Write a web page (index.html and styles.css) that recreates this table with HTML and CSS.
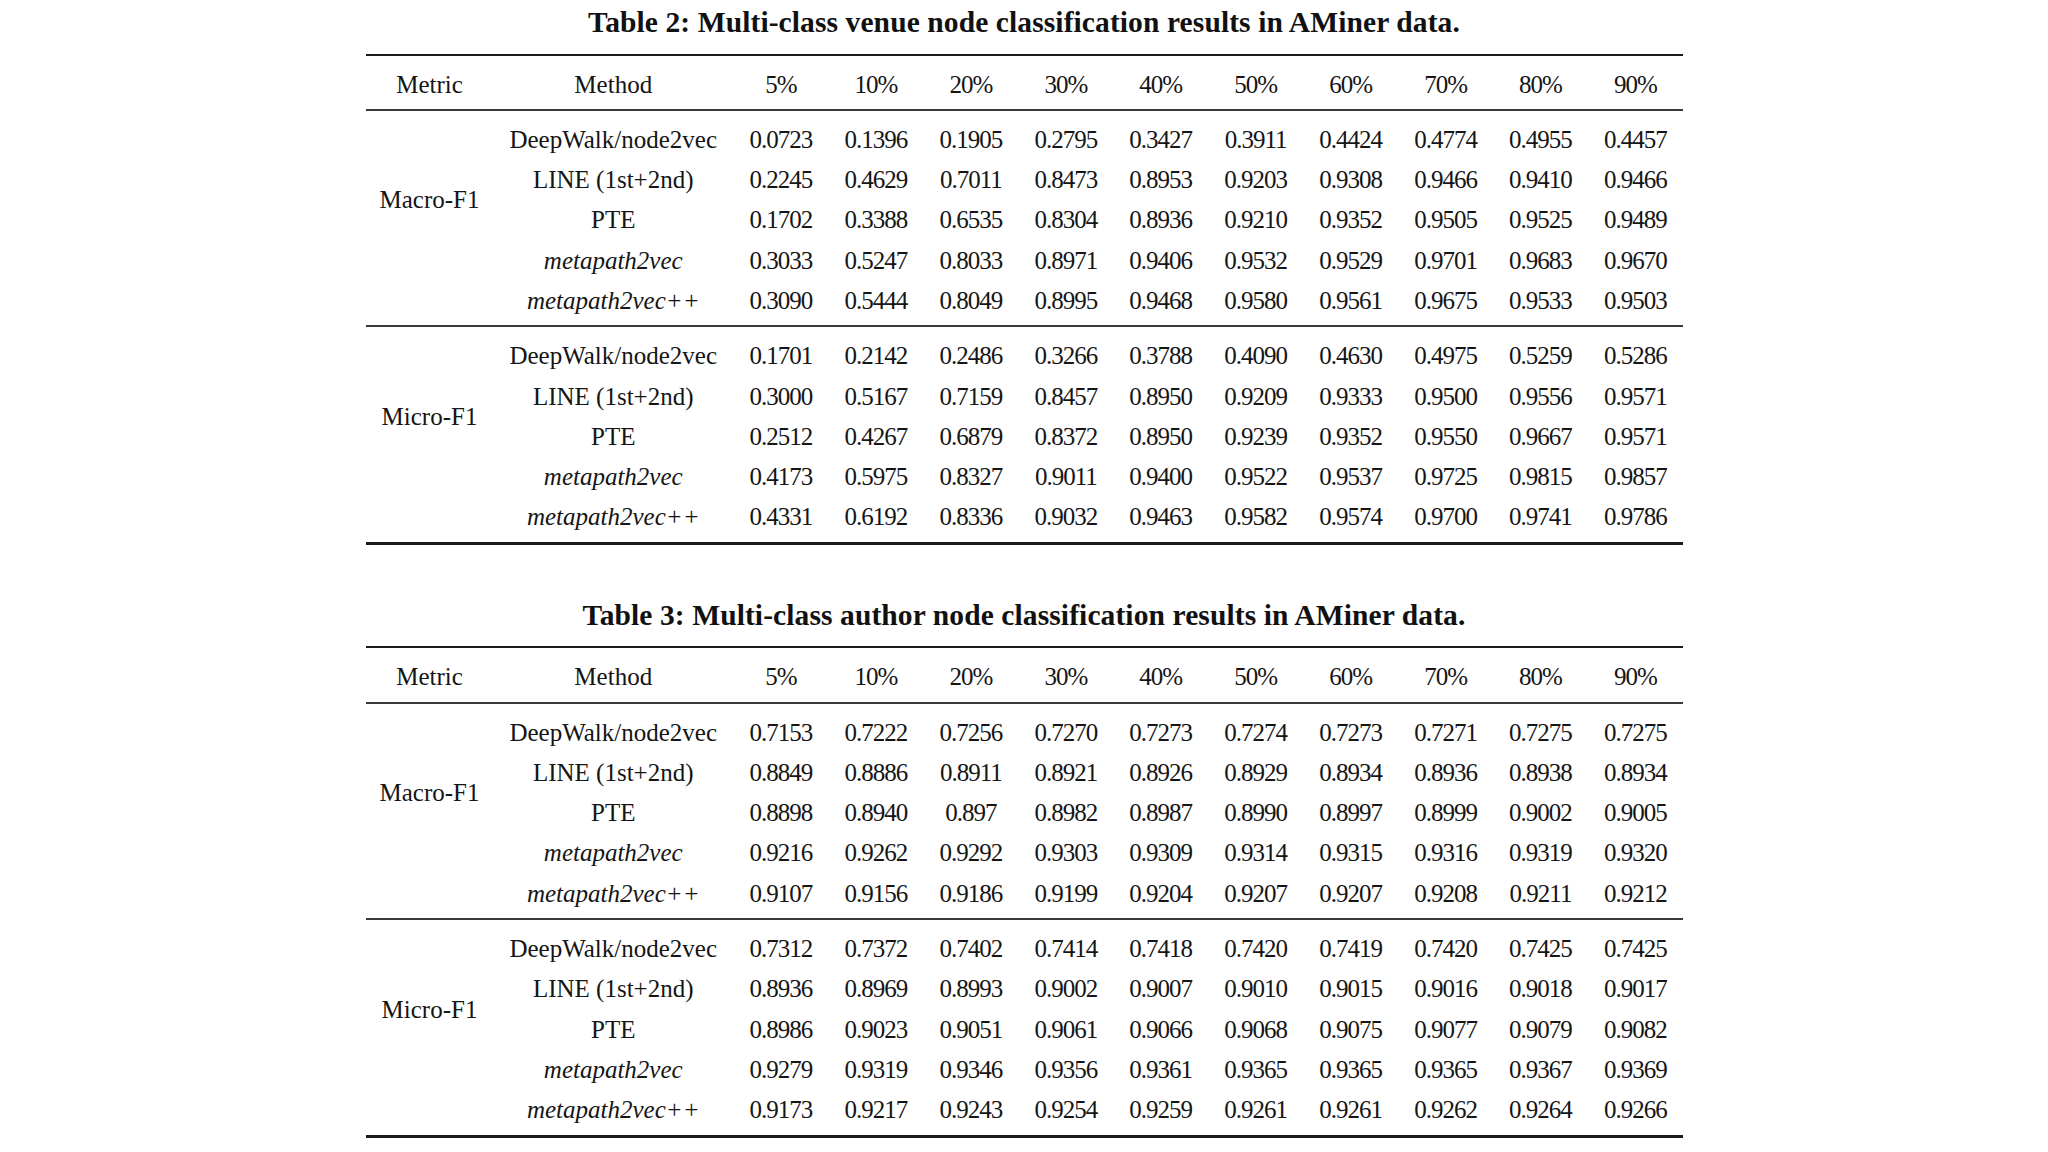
FILE: index.html
```html
<!DOCTYPE html>
<html lang="en">
<head>
<meta charset="utf-8">
<title>AMiner node classification results</title>
<link rel="stylesheet" href="styles.css">
</head>
<body>
<section class="block">
  <h2 class="caption">Table 2: Multi-class venue node classification results in AMiner data.</h2>
  <table class="tbl">
    <colgroup><col class="c-metric"><col class="c-method"><col class="c-num"><col class="c-num"><col class="c-num"><col class="c-num"><col class="c-num"><col class="c-num"><col class="c-num"><col class="c-num"><col class="c-num"><col class="c-num"></colgroup>
    <thead>
      <tr><th>Metric</th><th>Method</th><th class="num">5%</th><th class="num">10%</th><th class="num">20%</th><th class="num">30%</th><th class="num">40%</th><th class="num">50%</th><th class="num">60%</th><th class="num">70%</th><th class="num">80%</th><th class="num">90%</th></tr>
    </thead>
    <tbody>
      <tr><td class="metric" rowspan="5">Macro-F1</td><td>DeepWalk/node2vec</td><td class="num">0.0723</td><td class="num">0.1396</td><td class="num">0.1905</td><td class="num">0.2795</td><td class="num">0.3427</td><td class="num">0.3911</td><td class="num">0.4424</td><td class="num">0.4774</td><td class="num">0.4955</td><td class="num">0.4457</td></tr>
      <tr><td>LINE (1st+2nd)</td><td class="num">0.2245</td><td class="num">0.4629</td><td class="num">0.7011</td><td class="num">0.8473</td><td class="num">0.8953</td><td class="num">0.9203</td><td class="num">0.9308</td><td class="num">0.9466</td><td class="num">0.9410</td><td class="num">0.9466</td></tr>
      <tr><td>PTE</td><td class="num">0.1702</td><td class="num">0.3388</td><td class="num">0.6535</td><td class="num">0.8304</td><td class="num">0.8936</td><td class="num">0.9210</td><td class="num">0.9352</td><td class="num">0.9505</td><td class="num">0.9525</td><td class="num">0.9489</td></tr>
      <tr><td class="it">metapath2vec</td><td class="num">0.3033</td><td class="num">0.5247</td><td class="num">0.8033</td><td class="num">0.8971</td><td class="num">0.9406</td><td class="num">0.9532</td><td class="num">0.9529</td><td class="num">0.9701</td><td class="num">0.9683</td><td class="num">0.9670</td></tr>
      <tr><td class="it">metapath2vec++</td><td class="num">0.3090</td><td class="num">0.5444</td><td class="num">0.8049</td><td class="num">0.8995</td><td class="num">0.9468</td><td class="num">0.9580</td><td class="num">0.9561</td><td class="num">0.9675</td><td class="num">0.9533</td><td class="num">0.9503</td></tr>
    </tbody>
    <tbody class="grp2">
      <tr><td class="metric" rowspan="5">Micro-F1</td><td>DeepWalk/node2vec</td><td class="num">0.1701</td><td class="num">0.2142</td><td class="num">0.2486</td><td class="num">0.3266</td><td class="num">0.3788</td><td class="num">0.4090</td><td class="num">0.4630</td><td class="num">0.4975</td><td class="num">0.5259</td><td class="num">0.5286</td></tr>
      <tr><td>LINE (1st+2nd)</td><td class="num">0.3000</td><td class="num">0.5167</td><td class="num">0.7159</td><td class="num">0.8457</td><td class="num">0.8950</td><td class="num">0.9209</td><td class="num">0.9333</td><td class="num">0.9500</td><td class="num">0.9556</td><td class="num">0.9571</td></tr>
      <tr><td>PTE</td><td class="num">0.2512</td><td class="num">0.4267</td><td class="num">0.6879</td><td class="num">0.8372</td><td class="num">0.8950</td><td class="num">0.9239</td><td class="num">0.9352</td><td class="num">0.9550</td><td class="num">0.9667</td><td class="num">0.9571</td></tr>
      <tr><td class="it">metapath2vec</td><td class="num">0.4173</td><td class="num">0.5975</td><td class="num">0.8327</td><td class="num">0.9011</td><td class="num">0.9400</td><td class="num">0.9522</td><td class="num">0.9537</td><td class="num">0.9725</td><td class="num">0.9815</td><td class="num">0.9857</td></tr>
      <tr><td class="it">metapath2vec++</td><td class="num">0.4331</td><td class="num">0.6192</td><td class="num">0.8336</td><td class="num">0.9032</td><td class="num">0.9463</td><td class="num">0.9582</td><td class="num">0.9574</td><td class="num">0.9700</td><td class="num">0.9741</td><td class="num">0.9786</td></tr>
    </tbody>
  </table>
</section>

<section class="block block-second">
  <h2 class="caption">Table 3: Multi-class author node classification results in AMiner data.</h2>
  <table class="tbl">
    <colgroup><col class="c-metric"><col class="c-method"><col class="c-num"><col class="c-num"><col class="c-num"><col class="c-num"><col class="c-num"><col class="c-num"><col class="c-num"><col class="c-num"><col class="c-num"><col class="c-num"></colgroup>
    <thead>
      <tr><th>Metric</th><th>Method</th><th class="num">5%</th><th class="num">10%</th><th class="num">20%</th><th class="num">30%</th><th class="num">40%</th><th class="num">50%</th><th class="num">60%</th><th class="num">70%</th><th class="num">80%</th><th class="num">90%</th></tr>
    </thead>
    <tbody>
      <tr><td class="metric" rowspan="5">Macro-F1</td><td>DeepWalk/node2vec</td><td class="num">0.7153</td><td class="num">0.7222</td><td class="num">0.7256</td><td class="num">0.7270</td><td class="num">0.7273</td><td class="num">0.7274</td><td class="num">0.7273</td><td class="num">0.7271</td><td class="num">0.7275</td><td class="num">0.7275</td></tr>
      <tr><td>LINE (1st+2nd)</td><td class="num">0.8849</td><td class="num">0.8886</td><td class="num">0.8911</td><td class="num">0.8921</td><td class="num">0.8926</td><td class="num">0.8929</td><td class="num">0.8934</td><td class="num">0.8936</td><td class="num">0.8938</td><td class="num">0.8934</td></tr>
      <tr><td>PTE</td><td class="num">0.8898</td><td class="num">0.8940</td><td class="num">0.897</td><td class="num">0.8982</td><td class="num">0.8987</td><td class="num">0.8990</td><td class="num">0.8997</td><td class="num">0.8999</td><td class="num">0.9002</td><td class="num">0.9005</td></tr>
      <tr><td class="it">metapath2vec</td><td class="num">0.9216</td><td class="num">0.9262</td><td class="num">0.9292</td><td class="num">0.9303</td><td class="num">0.9309</td><td class="num">0.9314</td><td class="num">0.9315</td><td class="num">0.9316</td><td class="num">0.9319</td><td class="num">0.9320</td></tr>
      <tr><td class="it">metapath2vec++</td><td class="num">0.9107</td><td class="num">0.9156</td><td class="num">0.9186</td><td class="num">0.9199</td><td class="num">0.9204</td><td class="num">0.9207</td><td class="num">0.9207</td><td class="num">0.9208</td><td class="num">0.9211</td><td class="num">0.9212</td></tr>
    </tbody>
    <tbody class="grp2">
      <tr><td class="metric" rowspan="5">Micro-F1</td><td>DeepWalk/node2vec</td><td class="num">0.7312</td><td class="num">0.7372</td><td class="num">0.7402</td><td class="num">0.7414</td><td class="num">0.7418</td><td class="num">0.7420</td><td class="num">0.7419</td><td class="num">0.7420</td><td class="num">0.7425</td><td class="num">0.7425</td></tr>
      <tr><td>LINE (1st+2nd)</td><td class="num">0.8936</td><td class="num">0.8969</td><td class="num">0.8993</td><td class="num">0.9002</td><td class="num">0.9007</td><td class="num">0.9010</td><td class="num">0.9015</td><td class="num">0.9016</td><td class="num">0.9018</td><td class="num">0.9017</td></tr>
      <tr><td>PTE</td><td class="num">0.8986</td><td class="num">0.9023</td><td class="num">0.9051</td><td class="num">0.9061</td><td class="num">0.9066</td><td class="num">0.9068</td><td class="num">0.9075</td><td class="num">0.9077</td><td class="num">0.9079</td><td class="num">0.9082</td></tr>
      <tr><td class="it">metapath2vec</td><td class="num">0.9279</td><td class="num">0.9319</td><td class="num">0.9346</td><td class="num">0.9356</td><td class="num">0.9361</td><td class="num">0.9365</td><td class="num">0.9365</td><td class="num">0.9365</td><td class="num">0.9367</td><td class="num">0.9369</td></tr>
      <tr><td class="it">metapath2vec++</td><td class="num">0.9173</td><td class="num">0.9217</td><td class="num">0.9243</td><td class="num">0.9254</td><td class="num">0.9259</td><td class="num">0.9261</td><td class="num">0.9261</td><td class="num">0.9262</td><td class="num">0.9264</td><td class="num">0.9266</td></tr>
    </tbody>
  </table>
</section>
</body>
</html>
```

FILE: styles.css
```css
html, body {
  margin: 0;
  padding: 0;
  background: #ffffff;
}

body {
  width: 2048px;
  height: 1152px;
  overflow: hidden;
  font-family: "Liberation Serif", "Times New Roman", serif;
  color: #151515;
}

.block {
  padding-top: 5px;
}

.block-second {
  margin-top: 48px;
}

.caption {
  margin: 0 0 14.5px 0;
  font-size: 29.5px;
  letter-spacing: 0.1px;
  line-height: 34px;
  font-weight: bold;
  text-align: center;
  color: #111111;
}

.tbl {
  width: 1317px;
  margin: 0 auto;
  table-layout: fixed;
  border-collapse: separate;
  border-spacing: 0;
  border-top: 2px solid #1a1a1a;
  border-bottom: 3px solid #1a1a1a;
  font-size: 25px;
}

.c-metric { width: 128px; }
.c-method { width: 239.5px; }
.c-num { width: 94.95px; }

.tbl th,
.tbl td {
  padding: 0;
  line-height: 40.3px;
  text-align: center;
  font-weight: normal;
  white-space: nowrap;
  vertical-align: middle;
}

.tbl thead th {
  padding-top: 9px;
  padding-bottom: 4px;
  border-bottom: 2px solid #3a3a3a;
}

.tbl tbody tr:first-child td {
  padding-top: 9px;
}

.tbl tbody tr:last-child td {
  padding-bottom: 4px;
}

.tbl .grp2 tr:first-child td {
  border-top: 2px solid #3a3a3a;
}

.tbl tbody tr:first-child td.metric {
  vertical-align: top;
  padding-top: 69.5px;
}

.tbl .num {
  letter-spacing: -1px;
  text-indent: 1px;
}

.tbl .it {
  font-style: italic;
}
```
